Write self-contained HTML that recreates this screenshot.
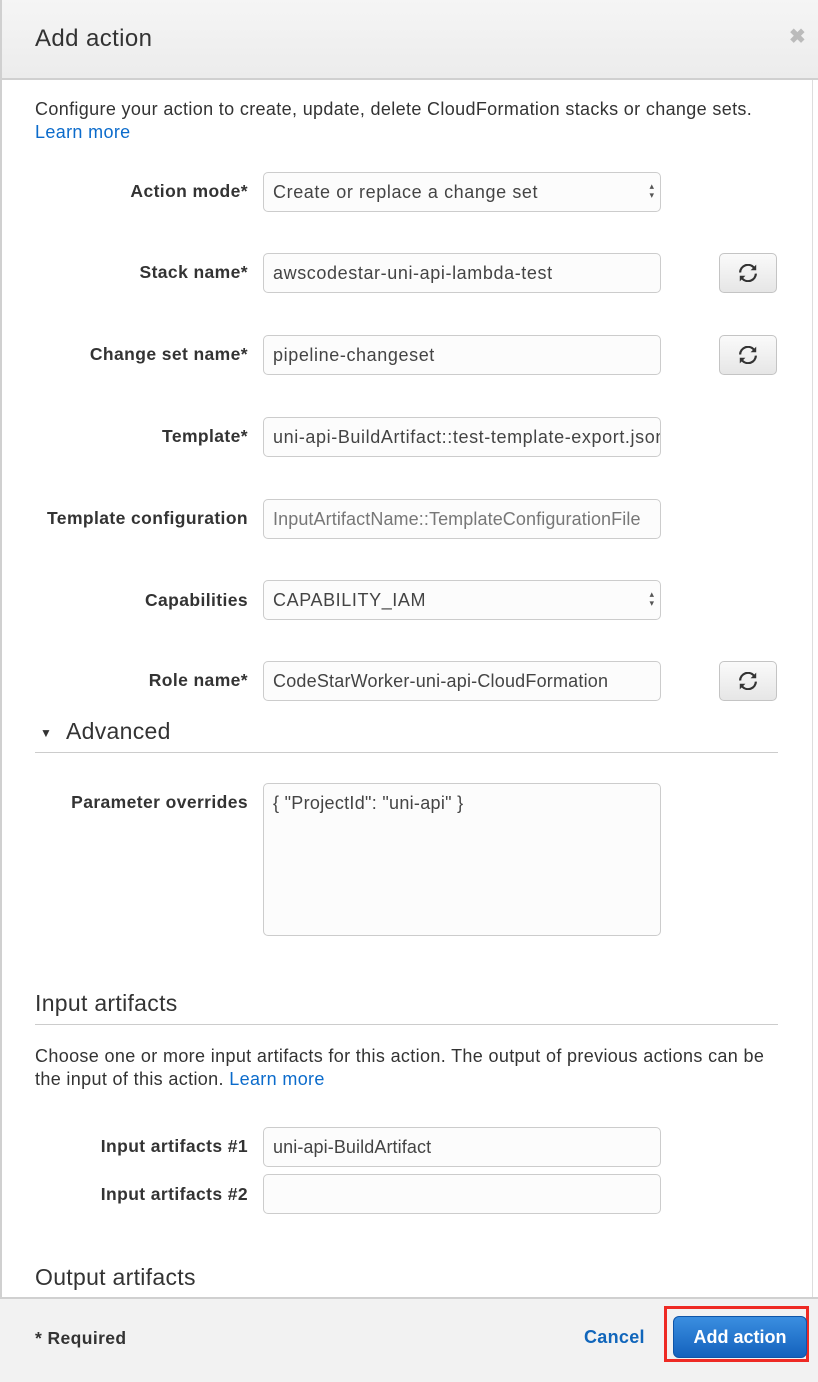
<!DOCTYPE html><html><head><style>
body{margin:0;width:818px;height:1380px;overflow:hidden;background:#fff;font-family:"Liberation Sans",sans-serif;color:#333;position:relative}
.a{position:absolute}
.lbl{position:absolute;right:570px;font-weight:bold;font-size:17.5px;letter-spacing:0.4px;color:#333;white-space:nowrap}
.in{position:absolute;left:263px;border:1px solid #ccc;border-radius:5px;background:#fcfcfc;font-size:18px;letter-spacing:0.6px;color:#444;line-height:38px;padding-left:9px;box-sizing:border-box;width:398px;height:40px;overflow:hidden;white-space:nowrap}
.btn{position:absolute;left:719px;width:58px;height:40px;border:1px solid #c4c4c4;border-radius:5px;background:linear-gradient(#fafafa,#e6e6e6);box-sizing:border-box;display:flex;align-items:center;justify-content:center}
.sel:after{content:"▴\A▾";white-space:pre;position:absolute;right:6px;top:9px;font-size:9px;line-height:9px;color:#555;letter-spacing:0}
h2{position:absolute;margin:0;font-weight:normal;font-size:23px;letter-spacing:0.3px;color:#333}
.hr{position:absolute;left:35px;width:743px;height:1px;background:#ccc}
.txt{position:absolute;left:35px;font-size:18px;letter-spacing:0.35px;line-height:23px;color:#333;white-space:nowrap}
a{color:#0b6bcb;text-decoration:none}
</style></head><body>
<div class="a" style="left:0;top:0;width:818px;height:78px;background:linear-gradient(#f5f5f5,#ececec);border-bottom:2px solid #d0d0d0"></div>
<div class="a" style="left:0;top:0;width:2px;height:1380px;background:#d0d0d0"></div>
<div class="a" style="left:812px;top:80px;width:1px;height:1217px;background:#ddd"></div>
<div class="a" style="left:35px;top:25px;font-size:24px;letter-spacing:0.4px;color:#333">Add action</div>
<div class="a" style="left:789px;top:24px;font-size:20px;color:#bbb;font-weight:bold">✖</div>
<div class="txt" style="top:98px">Configure your action to create, update, delete CloudFormation stacks or change sets.<br><a>Learn more</a></div>

<div class="lbl" style="top:181px">Action mode*</div><div class="in sel" style="top:172px">Create or replace a change set</div>
<div class="lbl" style="top:262px">Stack name*</div><div class="in" style="top:253px">awscodestar-uni-api-lambda-test</div>
<div class="lbl" style="top:344px">Change set name*</div><div class="in" style="top:335px">pipeline-changeset</div>
<div class="lbl" style="top:426px">Template*</div><div class="in" style="top:417px">uni-api-BuildArtifact::test-template-export.json</div>
<div class="lbl" style="top:508px">Template configuration</div><div class="in" style="top:499px;color:#777;letter-spacing:0.1px">InputArtifactName::TemplateConfigurationFile</div>
<div class="lbl" style="top:590px">Capabilities</div><div class="in sel" style="top:580px">CAPABILITY_IAM</div>
<div class="lbl" style="top:670px">Role name*</div><div class="in" style="top:661px;letter-spacing:0.2px">CodeStarWorker-uni-api-CloudFormation</div>

<div class="btn" style="top:253px"><svg width="18" height="18" viewBox="0 0 16 16"><path d="M2 7.5A6 6 0 0 1 12.3 3.6L10.3 5.6h5V.6l-1.6 1.6A8 8 0 0 0 0 7.5zM14 8.5A6 6 0 0 1 3.7 12.4l2-2h-5v5l1.6-1.6A8 8 0 0 0 16 8.5z" fill="#333"/></svg></div>
<div class="btn" style="top:335px"><svg width="18" height="18" viewBox="0 0 16 16"><path d="M2 7.5A6 6 0 0 1 12.3 3.6L10.3 5.6h5V.6l-1.6 1.6A8 8 0 0 0 0 7.5zM14 8.5A6 6 0 0 1 3.7 12.4l2-2h-5v5l1.6-1.6A8 8 0 0 0 16 8.5z" fill="#333"/></svg></div>
<div class="btn" style="top:661px"><svg width="18" height="18" viewBox="0 0 16 16"><path d="M2 7.5A6 6 0 0 1 12.3 3.6L10.3 5.6h5V.6l-1.6 1.6A8 8 0 0 0 0 7.5zM14 8.5A6 6 0 0 1 3.7 12.4l2-2h-5v5l1.6-1.6A8 8 0 0 0 16 8.5z" fill="#333"/></svg></div>

<div class="a" style="left:40px;top:726px;font-size:12px;color:#333">▼</div>
<h2 style="left:66px;top:718px">Advanced</h2>
<div class="hr" style="top:752px"></div>
<div class="lbl" style="top:792px">Parameter overrides</div>
<div class="in" style="top:783px;height:153px;line-height:38px;letter-spacing:0.3px">{ "ProjectId": "uni-api" }</div>

<h2 style="left:35px;top:990px">Input artifacts</h2>
<div class="hr" style="top:1024px"></div>
<div class="txt" style="top:1045px">Choose one or more input artifacts for this action. The output of previous actions can be<br>the input of this action. <a>Learn more</a></div>
<div class="lbl" style="top:1136px">Input artifacts #1</div><div class="in" style="top:1127px;letter-spacing:0.1px">uni-api-BuildArtifact</div>
<div class="lbl" style="top:1184px">Input artifacts #2</div><div class="in" style="top:1174px"></div>
<h2 style="left:35px;top:1264px">Output artifacts</h2>

<div class="a" style="left:0;top:1297px;width:818px;height:83px;background:#f2f2f2;border-top:2px solid #d0d0d0"></div>
<div class="a" style="left:35px;top:1328px;font-weight:bold;font-size:17.5px;letter-spacing:0.4px;color:#333">* Required</div>
<div class="a" style="left:584px;top:1327px;font-weight:bold;font-size:18px;letter-spacing:0.3px;color:#1166bb">Cancel</div>
<div class="a" style="left:664px;top:1306px;width:145px;height:56px;border:3px solid #ee2a24;box-sizing:border-box"></div>
<div class="a" style="left:673px;top:1316px;width:134px;height:42px;border-radius:6px;background:linear-gradient(#3a8ee0,#1462bd);border:1px solid #0f55a8;box-sizing:border-box;color:#fff;font-weight:bold;font-size:18px;text-align:center;line-height:40px">Add action</div>
</body></html>
